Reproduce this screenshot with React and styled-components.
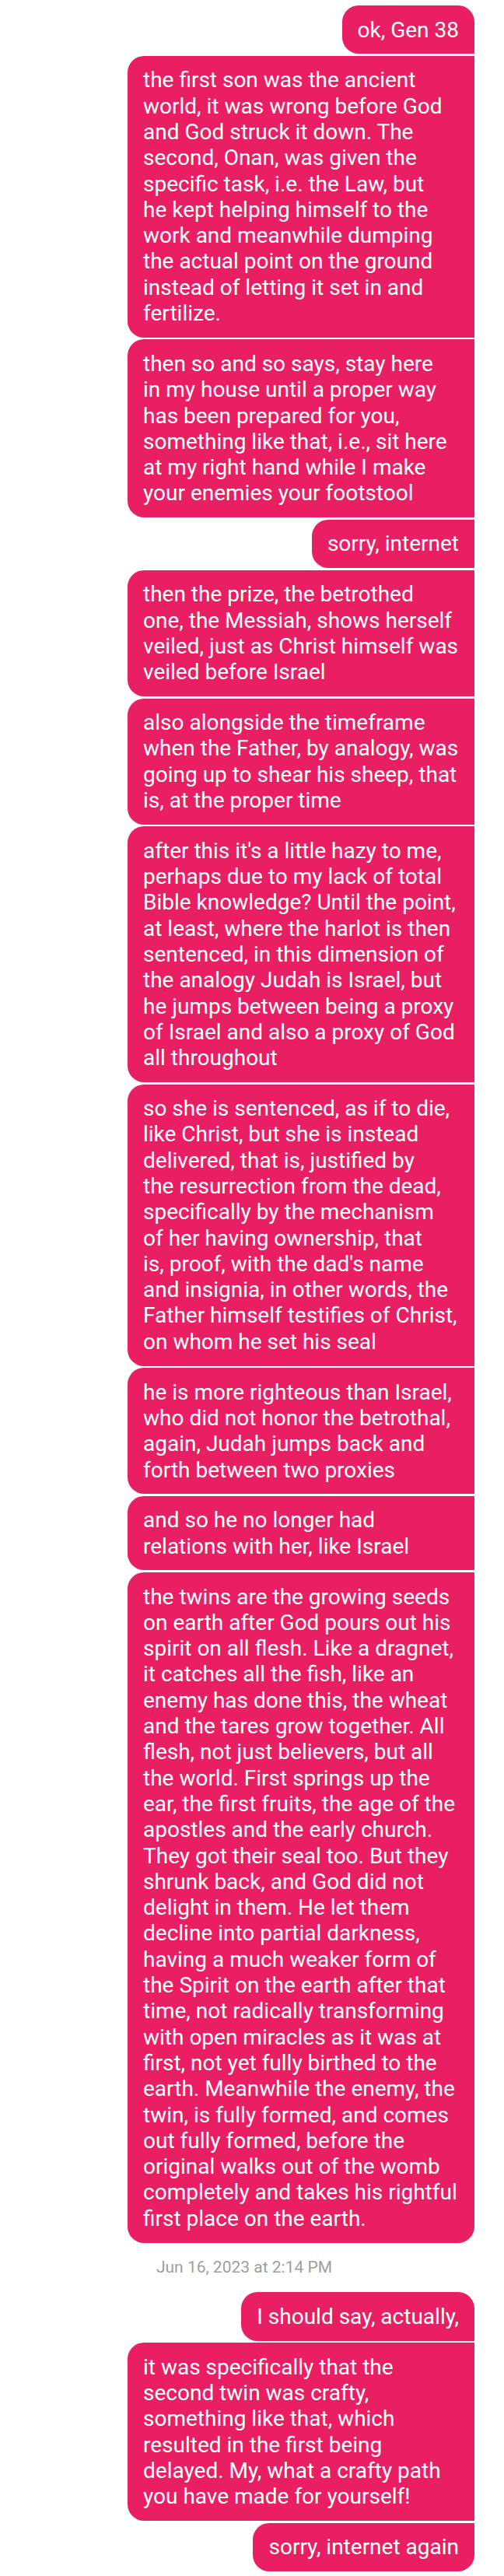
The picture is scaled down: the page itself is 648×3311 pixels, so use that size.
import React from 'react'
import styled, { createGlobalStyle } from 'styled-components';

const GlobalStyle = createGlobalStyle`
    body {
        margin: 0;
        background: #ffffff;
        font-family: Roboto, "Noto Sans", sans-serif;
    }
`;

const StyledThread = styled.div`
    display: flex;
    flex-direction: column;
    align-items: flex-end;
    padding: 7px 38px 7px 0;
    gap: 2.6px;
`;

const Bubble = styled.div`
    box-sizing: border-box;
    width: ${({ $wide }) => ($wide ? '446px' : 'auto')};
    max-width: 446px;
    padding: 14.5px 20px;
    background-color: #ea1e63;
    color: #ffffff;
    font-size: 28px;
    line-height: 33.3px;
    white-space: nowrap;
    border-radius: 21px ${({ $first }) => ($first ? '21px' : '0')} ${({ $last }) => ($last ? '21px' : '0')} 21px;
`;

const Line = styled.div``;

const Stamp = styled.div`
    align-self: stretch;
    height: 58.8px;
    display: flex;
    align-items: center;
    justify-content: center;
    margin-right: -18px;
    color: #9e9e9e;
    font-size: 21px;
`;

const messages = [
    { lines: ['ok, Gen 38'], first: true },
    { lines: [
        'the first son was the ancient',
        'world, it was wrong before God',
        'and God struck it down. The',
        'second, Onan, was given the',
        'specific task, i.e. the Law, but',
        'he kept helping himself to the',
        'work and meanwhile dumping',
        'the actual point on the ground',
        'instead of letting it set in and',
        'fertilize.',
    ] },
    { lines: [
        'then so and so says, stay here',
        'in my house until a proper way',
        'has been prepared for you,',
        'something like that, i.e., sit here',
        'at my right hand while I make',
        'your enemies your footstool',
    ] },
    { lines: ['sorry, internet'] },
    { lines: [
        'then the prize, the betrothed',
        'one, the Messiah, shows herself',
        'veiled, just as Christ himself was',
        'veiled before Israel',
    ] },
    { lines: [
        'also alongside the timeframe',
        'when the Father, by analogy, was',
        'going up to shear his sheep, that',
        'is, at the proper time',
    ] },
    { lines: [
        "after this it's a little hazy to me,",
        'perhaps due to my lack of total',
        'Bible knowledge? Until the point,',
        'at least, where the harlot is then',
        'sentenced, in this dimension of',
        'the analogy Judah is Israel, but',
        'he jumps between being a proxy',
        'of Israel and also a proxy of God',
        'all throughout',
    ] },
    { lines: [
        'so she is sentenced, as if to die,',
        'like Christ, but she is instead',
        'delivered, that is, justified by',
        'the resurrection from the dead,',
        'specifically by the mechanism',
        'of her having ownership, that',
        "is, proof, with the dad's name",
        'and insignia, in other words, the',
        'Father himself testifies of Christ,',
        'on whom he set his seal',
    ] },
    { lines: [
        'he is more righteous than Israel,',
        'who did not honor the betrothal,',
        'again, Judah jumps back and',
        'forth between two proxies',
    ] },
    { lines: [
        'and so he no longer had',
        'relations with her, like Israel',
    ] },
    { lines: [
        'the twins are the growing seeds',
        'on earth after God pours out his',
        'spirit on all flesh. Like a dragnet,',
        'it catches all the fish, like an',
        'enemy has done this, the wheat',
        'and the tares grow together. All',
        'flesh, not just believers, but all',
        'the world. First springs up the',
        'ear, the first fruits, the age of the',
        'apostles and the early church.',
        'They got their seal too. But they',
        'shrunk back, and God did not',
        'delight in them. He let them',
        'decline into partial darkness,',
        'having a much weaker form of',
        'the Spirit on the earth after that',
        'time, not radically transforming',
        'with open miracles as it was at',
        'first, not yet fully birthed to the',
        'earth. Meanwhile the enemy, the',
        'twin, is fully formed, and comes',
        'out fully formed, before the',
        'original walks out of the womb',
        'completely and takes his rightful',
        'first place on the earth.',
    ], last: true },
    { stamp: 'Jun 16, 2023 at 2:14 PM' },
    { lines: ['I should say, actually,'], first: true },
    { lines: [
        'it was specifically that the',
        'second twin was crafty,',
        'something like that, which',
        'resulted in the first being',
        'delayed. My, what a crafty path',
        'you have made for yourself!',
    ] },
    { lines: ['sorry, internet again'], last: true },
];

const App = () => {
    return (
        <>
            <GlobalStyle />
            <StyledThread>
                {messages.map((msg, i) =>
                    msg.stamp ? (
                        <Stamp key={i}>{msg.stamp}</Stamp>
                    ) : (
                        <Bubble key={i} $wide={msg.lines.length > 1} $first={msg.first} $last={msg.last}>
                            {msg.lines.map((line, j) => <Line key={j}>{line}</Line>)}
                        </Bubble>
                    )
                )}
            </StyledThread>
        </>
    )
}

export default App
